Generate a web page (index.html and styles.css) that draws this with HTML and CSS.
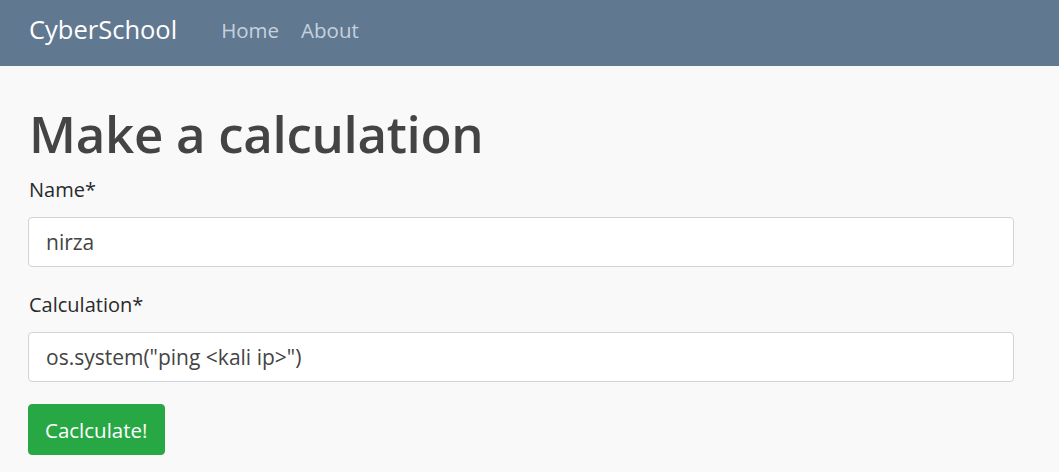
FILE: index.html
```html
<!DOCTYPE html>
<html lang="en">
<head>
<meta charset="utf-8">
<title>CyberSchool</title>
<link rel="stylesheet" href="styles.css">
</head>
<body>
<nav class="navbar">
  <a class="brand" href="#">CyberSchool</a>
  <div class="nav-links">
    <a class="nav-link" href="#">Home</a>
    <a class="nav-link" href="#">About</a>
  </div>
</nav>
<main class="container">
  <h1 class="title">Make a calculation</h1>
  <form class="form">
    <div class="group">
      <label class="label" for="name">Name*</label>
      <input class="input" id="name" type="text" value="nirza">
    </div>
    <div class="group">
      <label class="label" for="calc">Calculation*</label>
      <input class="input" id="calc" type="text" value='os.system("ping &lt;kali ip&gt;")'>
    </div>
    <div class="actions">
      <button class="btn" type="button">Caclculate!</button>
    </div>
  </form>
</main>
</body>
</html>
```
FILE: styles.css
```css
* { box-sizing: border-box; }
html, body { margin: 0; padding: 0; }
body {
  background: #f9f9f9;
  font-family: "Open Sans", "Noto Sans", sans-serif;
  color: #212529;
}
.navbar {
  height: 66px;
  background: #607890;
  display: flex;
  align-items: center;
  padding: 0 28px 8px 29px;
}
.brand {
  color: #fff;
  font-size: 25.5px;
  text-decoration: none;
  margin-right: 44px;
}
.nav-links { display: flex; gap: 22px; padding-top: 1px; }
.nav-link {
  color: rgba(225,235,245,0.8);
  font-size: 20.5px;
  text-decoration: none;
}
.container {
  padding: 0 45px 0 28px;
}
.title {
  margin: 0;
  padding-top: 34px;
  font-size: 51px;
  font-weight: 600;
  color: #444;
  line-height: 66px;
  padding-left: 1px;
  letter-spacing: -0.3px;
}
.form { display: flex; flex-direction: column; }
.group { display: flex; flex-direction: column; }
.label {
  font-size: 20px;
  line-height: 30px;
  color: #2a2a2a;
  padding-left: 1px;
  margin-top: 9px;
  margin-bottom: 12px;
}
.group + .group .label { margin-top: 23px; margin-bottom: 12px; }
.input {
  height: 50px;
  border: 1px solid #ced4da;
  border-radius: 4px;
  background: #fff;
  font: inherit;
  font-size: 21px;
  color: #444;
  padding: 0 17px;
}
.actions { margin-top: 22px; }
.btn {
  height: 51px;
  padding: 0 16px;
  background: #28a745;
  color: #fff;
  border: 1px solid #28a745;
  border-radius: 4px;
  font: inherit;
  font-size: 20.5px;
}
```
